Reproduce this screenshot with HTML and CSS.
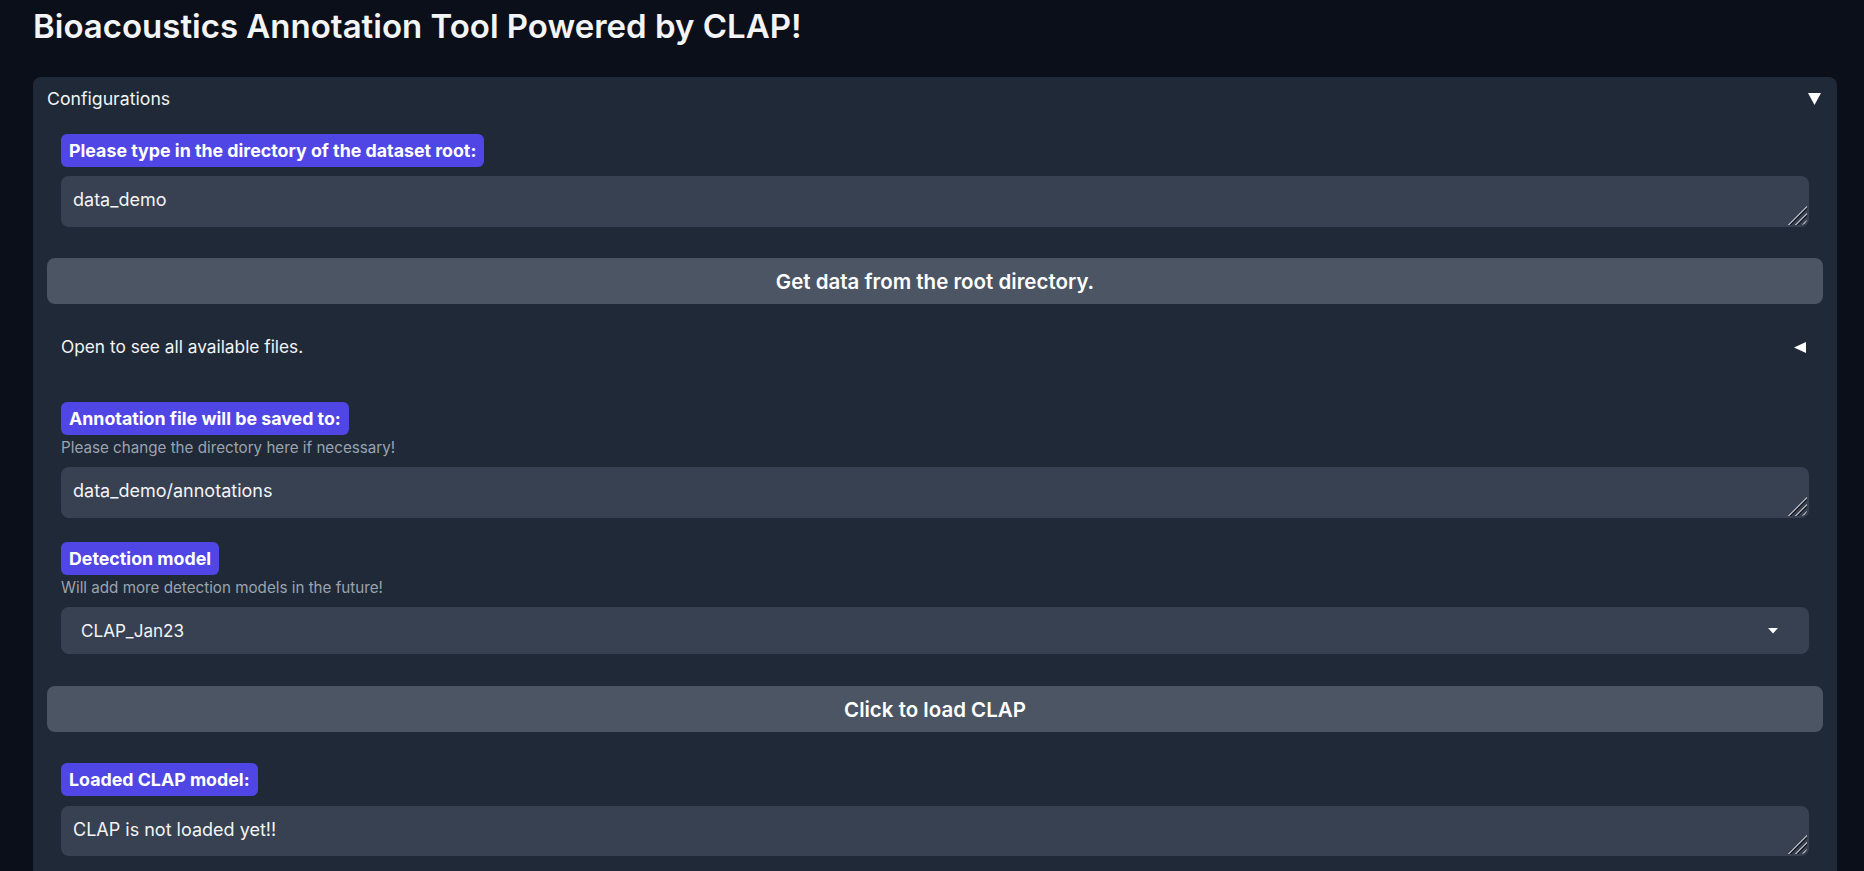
FILE: index.html
```html
<!DOCTYPE html>
<html lang="en">
<head>
<meta charset="utf-8">
<title>Bioacoustics Annotation Tool</title>
<link rel="stylesheet" href="styles.css">
</head>
<body>
<div class="app">
  <h1 class="title">Bioacoustics Annotation Tool Powered by CLAP!</h1>
  <section class="panel">
    <div class="acc-head">
      <span>Configurations</span>
      <svg class="caret" width="13" height="12" viewBox="0 0 13 12"><polygon points="0,0 13,0 6.5,12" fill="#ffffff"/></svg>
    </div>
    <div class="acc-body">
      <div class="block">
        <span class="badge">Please type in the directory of the dataset root:</span>
        <div class="field"><textarea class="textbox" rows="1">data_demo</textarea></div>
      </div>
      <button class="btn">Get data from the root directory.</button>
      <div class="acc-head sub">
        <span>Open to see all available files.</span>
        <svg class="caret" width="12" height="11" viewBox="0 0 12 11"><polygon points="12,0 12,11 0,5.5" fill="#ffffff"/></svg>
      </div>
      <div class="form">
        <div class="block">
          <span class="badge">Annotation file will be saved to:</span>
          <span class="info">Please change the directory here if necessary!</span>
          <div class="field"><textarea class="textbox" rows="1">data_demo/annotations</textarea></div>
        </div>
        <div class="block">
          <span class="badge">Detection model</span>
          <span class="info">Will add more detection models in the future!</span>
          <div class="dropdown">
            <span>CLAP_Jan23</span>
            <svg width="10" height="6" viewBox="0 0 10 6"><polygon points="0,0 10,0 5,5.5" fill="#ffffff"/></svg>
          </div>
        </div>
      </div>
      <button class="btn">Click to load CLAP</button>
      <div class="block">
        <span class="badge">Loaded CLAP model:</span>
        <div class="field short"><textarea class="textbox" rows="1">CLAP is not loaded yet!!</textarea></div>
      </div>
    </div>
  </section>
</div>
</body>
</html>
```
FILE: styles.css
```css
html, body {
  margin: 0;
  background: #0b0f19;
  overflow: hidden;
}

body {
  font-family: Inter, "Noto Sans", sans-serif;
  color: #f3f4f6;
}

.app {
  padding: 0 27px 0 33px;
}

.title {
  margin: 0;
  padding-top: 6px;
  font-size: 33px;
  font-weight: 600;
  line-height: 40px;
  color: #f3f4f6;
}

.panel {
  margin-top: 31px;
  background: #1f2937;
  border-radius: 8px;
  padding-bottom: 14px;
}

.acc-head {
  display: flex;
  align-items: center;
  justify-content: space-between;
  padding: 10px 16px 12px 14px;
  font-size: 17.7px;
  line-height: 24px;
  color: #f3f4f6;
}

.acc-head.sub {
  padding: 11px 17px 11px 14px;
  font-size: 17.3px;
}

.caret {
  display: block;
}

.acc-body {
  display: flex;
  flex-direction: column;
  gap: 20px;
  padding: 0 14px;
}

.form {
  display: flex;
  flex-direction: column;
}

.block {
  display: flex;
  flex-direction: column;
  align-items: flex-start;
  padding: 11px 14px;
  border-radius: 8px;
}

.form .block {
  padding: 12px 14px;
}

.badge {
  display: inline-block;
  background: #4f46e5;
  color: #ffffff;
  font-size: 17.8px;
  font-weight: 700;
  line-height: 21px;
  padding: 6px 8px;
  border-radius: 6px;
}

.info {
  margin-top: 3px;
  font-size: 15.2px;
  line-height: 20px;
  color: #9ca3af;
}

.field {
  position: relative;
  align-self: stretch;
  margin-top: 9px;
}

.field.short {
  margin-top: 10px;
}

.field::after {
  content: "";
  position: absolute;
  right: 2px;
  bottom: 2px;
  width: 21px;
  height: 21px;
  background: repeating-linear-gradient(135deg,
    transparent 0 1px,
    #a3a8b0 1px 2.5px,
    #1b1f27 2.5px 4px,
    transparent 4px 5px);
  clip-path: polygon(100% 0, 100% 100%, 0 100%);
  border-bottom-right-radius: 6px;
}

.textbox {
  display: block;
  box-sizing: border-box;
  width: 100%;
  height: 51px;
  margin: 0;
  padding: 11px 12px;
  border: none;
  outline: none;
  border-radius: 8px;
  background: #374151;
  color: #f3f4f6;
  font-family: Inter, "Noto Sans", sans-serif;
  font-size: 18px;
  line-height: 25px;
  resize: none;
  overflow: hidden;
}

.field.short .textbox {
  height: 50px;
}

.dropdown {
  align-self: stretch;
  display: flex;
  align-items: center;
  justify-content: space-between;
  box-sizing: border-box;
  height: 47px;
  margin-top: 9px;
  padding: 0 31px 0 20px;
  border-radius: 8px;
  background: #374151;
  font-size: 17.1px;
  line-height: 24px;
}

.btn {
  display: block;
  height: 46px;
  border: none;
  border-radius: 8px;
  background: #4b5563;
  color: #ffffff;
  font-family: Inter, "Noto Sans", sans-serif;
  font-size: 20.5px;
  font-weight: 600;
}
```
